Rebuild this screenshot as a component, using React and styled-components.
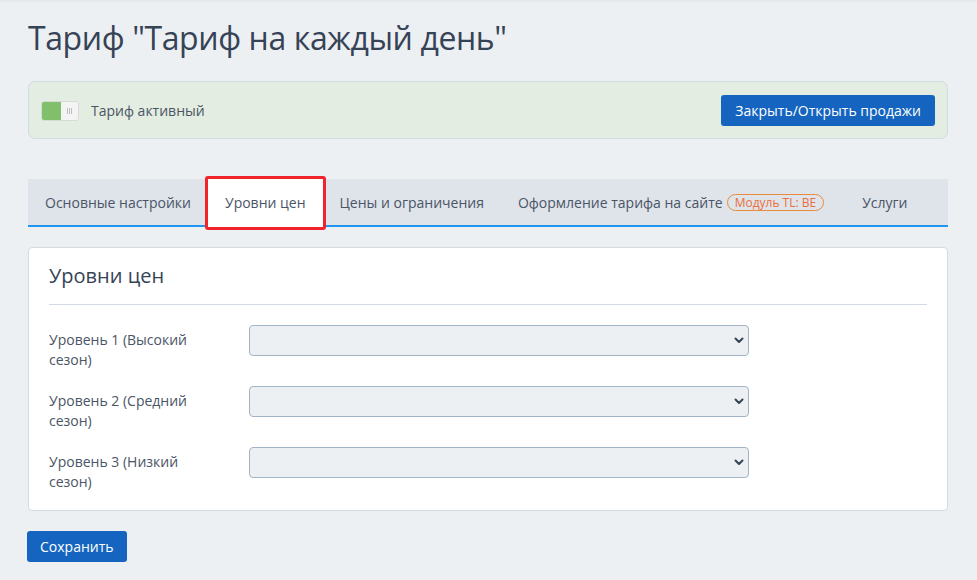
import React from "react";
import styled, { createGlobalStyle } from "styled-components";

const GlobalStyle = createGlobalStyle`
  html, body {
    margin: 0;
    padding: 0;
    background: #edf0f3;
    font-family: "Open Sans", "Noto Sans", sans-serif;
    color: #4a5566;
  }
  * { box-sizing: border-box; }
`;

const tabs = [
  { title: "Основные настройки" },
  { title: "Уровни цен", active: true },
  { title: "Цены и ограничения" },
  { title: "Оформление тарифа на сайте", badge: "Модуль TL: BE" },
  { title: "Услуги" },
];

const levels = [
  "Уровень 1 (Высокий сезон)",
  "Уровень 2 (Средний сезон)",
  "Уровень 3 (Низкий сезон)",
];

function Chevron() {
  return (
    <svg width="10" height="7" viewBox="0 0 10 7">
      <path
        d="M1.5 1.5 L5 5 L8.5 1.5"
        fill="none"
        stroke="#364356"
        strokeWidth="2"
        strokeLinecap="round"
        strokeLinejoin="round"
      />
    </svg>
  );
}

function App() {
  return (
    <Page>
      <GlobalStyle />
      <Title>Тариф "Тариф на каждый день"</Title>

      <StatusPanel>
        <Toggle>
          <ToggleOn />
          <ToggleKnob>
            <Grip />
            <Grip />
            <Grip />
          </ToggleKnob>
        </Toggle>
        <StatusText>Тариф активный</StatusText>
        <Button>Закрыть/Открыть продажи</Button>
      </StatusPanel>

      <TabBar>
        {tabs.map((t) => (
          <Tab key={t.title} $active={t.active} $wide={!!t.badge}>
            {t.title}
            {t.badge && <Badge>{t.badge}</Badge>}
            {t.active && <Highlight />}
          </Tab>
        ))}
      </TabBar>

      <Card>
        <CardTitle>Уровни цен</CardTitle>
        <Rows>
          {levels.map((l) => (
            <Row key={l}>
              <Label>{l}</Label>
              <SelectWrap>
                <Select defaultValue="">
                  <option value=""></option>
                </Select>
                <Arrow>
                  <Chevron />
                </Arrow>
              </SelectWrap>
            </Row>
          ))}
        </Rows>
      </Card>

      <SaveButton>Сохранить</SaveButton>
    </Page>
  );
}

const Page = styled.div`
  padding: 18px 29px 20px 28px;
  border-top: 2px solid #e4e7eb;
`;

const Title = styled.h1`
  margin: -2px 0 23px;
  font-size: 32px;
  line-height: 40px;
  letter-spacing: -0.4px;
  font-weight: 400;
  color: #364356;
`;

const StatusPanel = styled.div`
  display: flex;
  align-items: center;
  padding: 13px 12px 12px 12px;
  background: #e4ede1;
  border: 1px solid #d3dae2;
  border-radius: 7px;
`;

const Toggle = styled.div`
  display: flex;
  width: 38px;
  height: 20px;
  border-radius: 3px;
  overflow: hidden;
  border: 1px solid #d6dbd6;
`;

const ToggleOn = styled.div`
  width: 19px;
  background: #80c06a;
`;

const ToggleKnob = styled.div`
  flex: 1;
  display: flex;
  align-items: center;
  justify-content: center;
  gap: 1px;
  background: #f4f4f4;
`;

const Grip = styled.span`
  width: 1px;
  height: 6px;
  background: #bdbdbd;
`;

const StatusText = styled.span`
  margin-left: 12px;
  font-size: 14px;
  color: #4a5566;
  flex: 1;
`;

const Button = styled.button`
  height: 31px;
  padding: 0 14px;
  border: none;
  border-radius: 3px;
  background: #1565c0;
  color: #fff;
  font-family: "Open Sans", sans-serif;
  font-size: 14px;
  cursor: pointer;
`;

const TabBar = styled.div`
  display: flex;
  margin-top: 40px;
  height: 48px;
  background: #dfe3ea;
  border-bottom: 2px solid #2196f3;
`;

const Tab = styled.div`
  position: relative;
  display: flex;
  align-items: center;
  padding: 0 ${(p) => (p.$wide ? "21px" : "17px")} 1px 17px;
  margin-bottom: -2px;
  font-size: 14px;
  color: #4a5566;
  background: ${(p) => (p.$active ? "#fff" : "transparent")};
  white-space: nowrap;
`;

const Highlight = styled.span`
  position: absolute;
  left: -3px;
  right: -3px;
  top: -3px;
  bottom: -3px;
  border: 3px solid #f0242a;
  border-radius: 3px;
  pointer-events: none;
`;

const Badge = styled.span`
  margin-left: 4px;
  padding: 0 7px;
  height: 17px;
  line-height: 15px;
  border: 1px solid #e98b3a;
  border-radius: 9px;
  color: #e9703a;
  font-size: 12px;
`;

const Card = styled.div`
  margin-top: 20px;
  padding: 0 20px 18px 20px;
  background: #fff;
  border: 1px solid #d3dae2;
  border-radius: 4px;
`;

const CardTitle = styled.h2`
  margin: 0;
  padding: 14px 0 15px;
  font-size: 20px;
  line-height: 27px;
  font-weight: 400;
  color: #364356;
  border-bottom: 1px solid #d3dae2;
`;

const Rows = styled.div`
  display: flex;
  flex-direction: column;
  gap: 16px;
  padding-top: 20px;
`;

const Row = styled.div`
  display: flex;
  align-items: flex-start;
`;

const Label = styled.div`
  width: 200px;
  padding: 5px 40px 0 0;
  font-size: 14px;
  line-height: 20px;
  color: #4a5566;
`;

const SelectWrap = styled.div`
  position: relative;
  width: 500px;
`;

const Select = styled.select`
  display: block;
  width: 100%;
  height: 31px;
  appearance: none;
  background: #edf0f3;
  border: 1px solid #a3b3c8;
  border-radius: 4px;
  font-family: "Open Sans", sans-serif;
  font-size: 14px;
  color: #4a5566;
  padding: 0 30px 0 10px;
`;

const Arrow = styled.span`
  position: absolute;
  right: 5px;
  top: 12px;
  display: flex;
  pointer-events: none;
`;

const SaveButton = styled(Button)`
  margin-top: 20px;
  margin-left: -1px;
  padding: 0 13px;
`;

export default App;
